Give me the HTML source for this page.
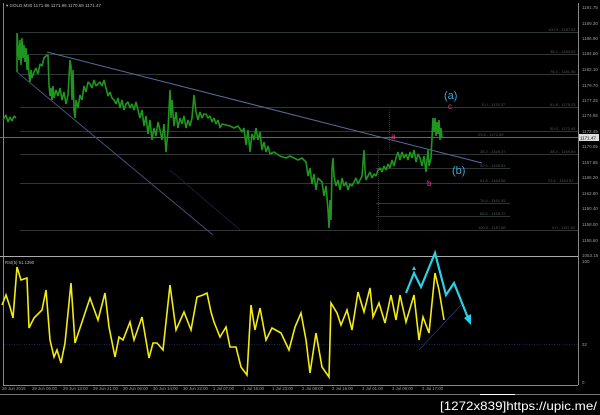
<!DOCTYPE html>
<html><head><meta charset="utf-8"><style>
html,body{margin:0;padding:0;background:#000;width:600px;height:415px;overflow:hidden}
svg{display:block}
text{font-family:"Liberation Sans",sans-serif}
.ax{fill:#9a9a9a;font-size:4.5px}
.fl{fill:#555;font-size:4px}
.tm{fill:#9a9a9a;font-size:4.3px}
</style></head><body>
<svg width="600" height="415" viewBox="0 0 600 415" xmlns="http://www.w3.org/2000/svg">
<rect width="600" height="415" fill="#000"/>
<line x1="3.5" y1="3" x2="3.5" y2="385" stroke="#888" stroke-width="1"/>
<line x1="578.5" y1="3" x2="578.5" y2="385" stroke="#888" stroke-width="1"/>
<line x1="3" y1="385.5" x2="578" y2="385.5" stroke="#888" stroke-width="1"/>
<line x1="0" y1="256.5" x2="578" y2="256.5" stroke="#aaa" stroke-width="1"/>
<text x="6" y="7" fill="#bbb" font-size="4.5">▾ GOLD,M30  1171.86  1171.98  1170.69  1171.47</text>
<g stroke="#3c4a4a" stroke-width="0.8">
<line x1="20" y1="32.5" x2="578" y2="32.5"/>
<line x1="20" y1="54.5" x2="578" y2="54.5"/>
<line x1="20" y1="74.5" x2="578" y2="74.5"/>
<line x1="20" y1="107.5" x2="578" y2="107.5"/>
<line x1="20" y1="131.5" x2="578" y2="131.5"/>
<line x1="20" y1="154.5" x2="578" y2="154.5"/>
<line x1="20" y1="183.5" x2="578" y2="183.5"/>
<line x1="20" y1="230.5" x2="578" y2="230.5"/>
<line x1="376" y1="168.5" x2="510" y2="168.5"/>
<line x1="376" y1="203.5" x2="510" y2="203.5"/>
<line x1="376" y1="216.5" x2="510" y2="216.5"/>
</g>
<line x1="0" y1="137.5" x2="578" y2="137.5" stroke="#8a8a8a" stroke-width="0.8"/>
<line x1="389.5" y1="110" x2="389.5" y2="150" stroke="#333" stroke-dasharray="1,1"/>
<line x1="378.5" y1="150" x2="378.5" y2="230" stroke="#333" stroke-dasharray="1,1"/>
<g class="fl">
<text x="548" y="31">100.0 - 1187.52</text>
<text x="550" y="53">38.2 - 1184.53</text>
<text x="550" y="73">76.4 - 1181.55</text>
<text x="482" y="106">0.0 - 1176.37</text>
<text x="550" y="106">61.8 - 1175.23</text>
<text x="478" y="136">23.6 - 1171.59</text>
<text x="550" y="130">50.0 - 1172.45</text>
<text x="480" y="153">38.2 - 1169.37</text>
<text x="550" y="153">38.2 - 1169.69</text>
<text x="480" y="167">50.0 - 1166.51</text>
<text x="480" y="182">61.8 - 1164.56</text>
<text x="548" y="182">23.6 - 1164.52</text>
<text x="480" y="202">76.4 - 1161.35</text>
<text x="480" y="215">88.6 - 1159.72</text>
<text x="478" y="229">100.0 - 1157.80</text>
<text x="552" y="229">0.0 - 1157.02</text>
</g>
<line x1="47" y1="52" x2="482" y2="163" stroke="#5a6a9c" stroke-width="1"/>
<line x1="17" y1="72" x2="213" y2="235" stroke="#44507a" stroke-width="1"/>
<line x1="170" y1="170" x2="240" y2="230" stroke="#222a44" stroke-width="0.7"/>
<g fill="none" stroke="#1f961f" stroke-width="1.6" stroke-linejoin="bevel">
<polyline points="3,120 6,115 8,122 10,117 12,121 14,116 16,118"/>
<polyline points="17,72 17,33 19,60 20,40 21,65 22,38 23,58 24,45 25,62 26,48 27,70 28,55 29,74 30,82 31,70 32,78 34,72 36,68 38,74 40,64 42,66 44,58 46,56 48,55 49,85 50,96 51,88 52,100 53,86 54,98 56,90 58,96 60,88 62,100 64,92 66,104 68,95 70,60 71,66 72,100 73,70 74,110 75,118 76,100 78,108 80,95 82,100 84,86 86,92 88,82 90,84 92,88 94,80 96,86 98,84 100,82 102,86 104,80 106,88 108,96 110,92 112,98 114,100 116,104 118,98 120,108 122,100 124,110 126,104 128,102 130,108 132,104 134,110 136,102 138,110 140,118 142,110 144,126 146,116 148,134 150,120 152,140 154,128 156,136 158,122 160,130 162,140 164,124 166,152 168,130 170,90 171,118 172,100 174,126 176,112 178,128 180,118 182,124 184,116 186,128 188,120 190,126 192,118 194,95 196,112 198,120 200,112 202,118 204,114 206,114 208,118 210,116 212,122 214,118 216,124 218,120 220,128 222,124 230,126 234,128 238,126 242,132 244,128 246,145 248,130 250,152 252,134 254,140 256,128 258,140 260,132 262,150 264,142 266,152 268,146 270,154 274,152 280,156 286,158 290,156 294,158 298,160 302,158 306,162 308,176 310,168 312,184 314,174 316,190 318,178 320,180 322,182 324,196 326,186 328,210 329,228 330,200 331,220 332,168 333,158 334,176 336,186 338,180 340,190 342,178 344,186 346,182 348,190 350,184 352,186 354,182 356,178 358,184 360,180 362,176 364,150 365,170 366,180 368,176 370,172 372,178 374,174 376,176 378,170 380,168 382,172 384,166 386,170 388,164 390,168 392,160 394,166 396,158 398,152 400,160 402,152 404,158 406,154 408,160 410,152 412,158 414,150 416,162 418,154 420,158 422,166 424,156 426,172 427,160 428,150 429,166 431,158 433,118 434,132 435,118 436,136 437,122 438,134 439,120 440,140 441,128 442,138"/>
</g>
<text x="444" y="99" fill="#3aa8d8" font-size="11">(a)</text>
<text x="448" y="109" fill="#e0408a" font-size="8">c</text>
<text x="391" y="139" fill="#e0408a" font-size="8">a</text>
<text x="452" y="174" fill="#3aa8d8" font-size="11">(b)</text>
<text x="427" y="186" fill="#e0408a" font-size="8">b</text>
<g class="ax">
<text x="582" y="9">1191.75</text>
<text x="582" y="25">1189.30</text>
<text x="582" y="40">1186.90</text>
<text x="582" y="55">1184.50</text>
<text x="582" y="71">1182.10</text>
<text x="582" y="87">1179.70</text>
<text x="582" y="102">1177.25</text>
<text x="582" y="117">1174.85</text>
<text x="582" y="133">1172.45</text>
<text x="582" y="148">1170.05</text>
<text x="582" y="164">1167.65</text>
<text x="582" y="179">1165.20</text>
<text x="582" y="195">1162.80</text>
<text x="582" y="210">1160.40</text>
<text x="582" y="226">1158.00</text>
<text x="582" y="242">1155.60</text>
<text x="582" y="257">1053.15</text>
<text x="582" y="263">100</text>
<text x="582" y="346">32</text>
<text x="582" y="384">0</text>
</g>
<rect x="579" y="134" width="20" height="7" fill="#ddd"/>
<text x="580" y="139.5" fill="#000" font-size="4.5">1171.47</text>
<text x="5" y="264" fill="#bbb" font-size="4.3">RSI(5) 51.1390</text>
<line x1="4" y1="344.5" x2="578" y2="344.5" stroke="#223366" stroke-width="0.7" stroke-dasharray="1,1.5"/>
<polyline fill="none" stroke="#f2ec10" stroke-width="1.6" points="2,305 6,295 10,307 13,318 17,267 21,280 27,278 29,328 34,318 42,310 46,290 50,340 54,357 57,350 61,363 65,343 71,283 75,343 80,328 90,298 98,320 105,293 109,327 115,357 119,337 123,340 130,322 134,340 142,317 149,358 153,343 157,343 163,350 170,285 176,330 184,312 191,330 197,297 203,295 207,293 211,312 214,322 220,337 226,327 230,347 236,347 241,367 247,375 251,305 255,330 260,308 266,340 272,328 281,333 289,350 295,327 301,313 306,340 310,373 316,333 322,367 329,377 331,303 337,313 341,325 347,310 352,330 358,292 364,312 370,288 373,317 379,303 385,323 391,295 396,320 400,295 406,322 414,295 419,340 423,317 429,333 435,273 439,290 444,320"/>
<line x1="419" y1="350" x2="461" y2="305" stroke="#2a3a7a" stroke-width="0.8"/>
<polyline fill="none" stroke="#2ad0e8" stroke-width="2.2" points="406,293 414,273 421,287 435,253 446,295 454,283 468,318"/>
<polygon points="471,325 464,318 471,314" fill="#2ad0e8"/>
<polygon points="412,270 416,270 414,266" fill="#2ad0e8"/>
<g class="tm">
<text x="2" y="390">26 Jun 2015</text>
<text x="32" y="390">29 Jun 05:00</text>
<text x="63" y="390">29 Jun 13:00</text>
<text x="93" y="390">29 Jun 21:00</text>
<text x="123" y="390">30 Jun 06:00</text>
<text x="153" y="390">30 Jun 14:00</text>
<text x="183" y="390">30 Jun 22:00</text>
<text x="213" y="390">1 Jul 07:00</text>
<text x="243" y="390">1 Jul 15:00</text>
<text x="272" y="390">1 Jul 23:00</text>
<text x="302" y="390">2 Jul 08:00</text>
<text x="332" y="390">2 Jul 16:00</text>
<text x="362" y="390">3 Jul 01:00</text>
<text x="392" y="390">3 Jul 09:00</text>
<text x="422" y="390">3 Jul 17:00</text>
</g>
<line x1="0" y1="394.5" x2="600" y2="394.5" stroke="#777" stroke-width="1"/>
<line x1="480" y1="394.5" x2="515" y2="394.5" stroke="#fff" stroke-width="1"/>
<text x="597" y="410" fill="#fff" font-size="12" text-anchor="end" font-family="Liberation Mono, DejaVu Sans Mono, monospace" textLength="157" lengthAdjust="spacingAndGlyphs">[1272x839]https://upic.me/</text>
</svg>
</body></html>
